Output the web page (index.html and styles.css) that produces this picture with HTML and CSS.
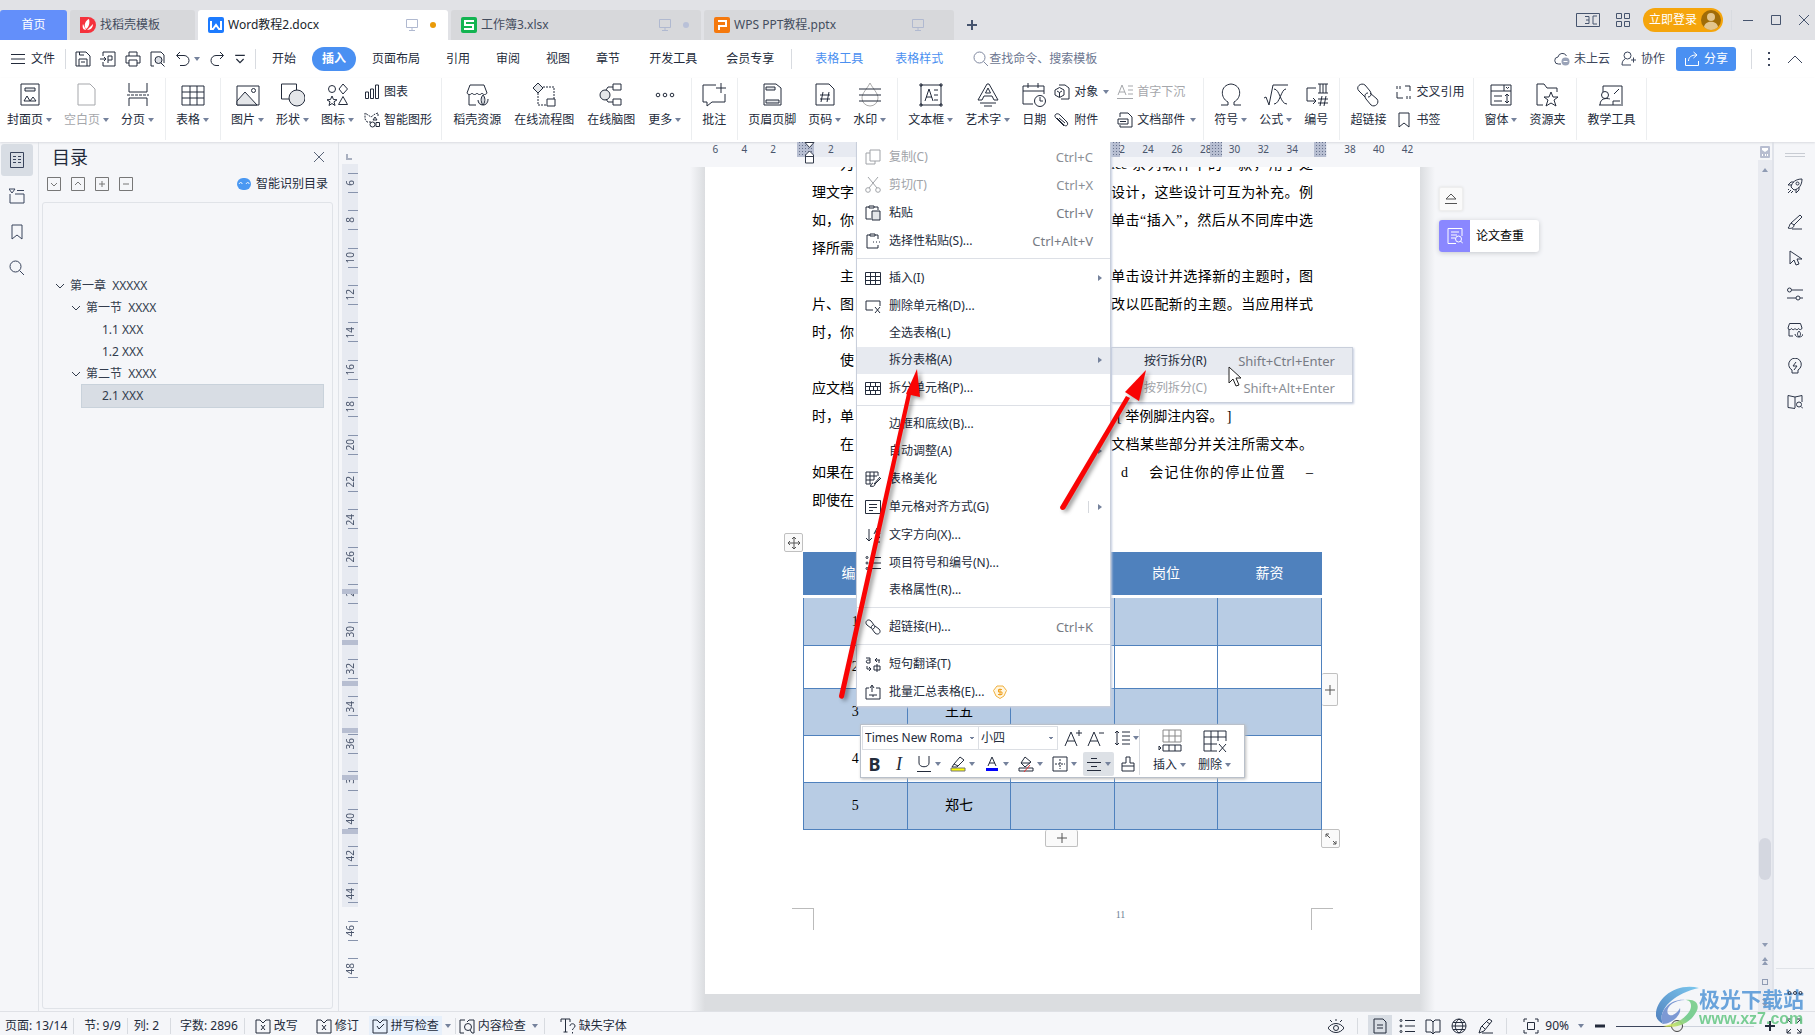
FILE: index.html
```html
<!DOCTYPE html>
<html lang="zh-CN">
<head>
<meta charset="utf-8">
<title>Word教程2.docx</title>
<link rel="stylesheet" href="styles.css">
</head>
<body>
<svg class="defs" aria-hidden="true">
<symbol id="i-monitor" viewBox="0 0 12 12"><path d="M.5.5h11v8H.5zM6 8.500v3M3 11.500h6"/></symbol>
<symbol id="i-save" viewBox="0 0 16 16"><path d="M1 1h10l4 4v10H1zM4 15V8h8v7M4.500 1v3H9M6 11h4"/></symbol>
<symbol id="i-pdf" viewBox="0 0 16 16"><path d="M3 5V1h12v14H3v-4M0 8h6M4 6l2 2-2 2M8 12V5h4v4H8"/></symbol>
<symbol id="i-print" viewBox="0 0 16 16"><path d="M4 5V1h8v4M1 5h14v7h-3M4 12H1V5M4 9h8v6H4z"/></symbol>
<symbol id="i-preview" viewBox="0 0 16 16"><path d="M4 15H1V1h10l3 3v8"/><circle cx="8.500" cy="9" r="3.500" fill="#dde0e6"/><path d="M11 12l3.500 3.500"/></symbol>
<symbol id="i-undo" viewBox="0 0 16 16"><path d="M5 1L1.500 4.500 5 8M2 4.500h7a5 5 0 0 1 0 10H5"/></symbol>
<symbol id="i-redo" viewBox="0 0 16 16"><path d="M11 1l3.500 3.500L11 8M14 4.500H7a5 5 0 0 0 0 10h3"/></symbol>
<symbol id="i-more" viewBox="0 0 10 10"><path d="M1 2h8M2 5l3 3 3-3"/></symbol>
<symbol id="i-menu" viewBox="0 0 14 12"><path d="M0 1.500h14M0 6h14M0 10.500h14"/></symbol>
<symbol id="i-search" viewBox="0 0 16 16"><circle cx="6.500" cy="6.500" r="5.500"/><path d="M10.500 10.500L15 15"/></symbol>
<symbol id="i-cloud" viewBox="0 0 16 16"><path d="M7 13H4.500a3.500 3.500 0 0 1-.5-7 4.500 4.500 0 0 1 8.500-1"/><circle cx="11.500" cy="10.500" r="4" fill="#9aa3b8" stroke="none"/><path d="M9.500 10.500h4" stroke="#fff"/></symbol>
<symbol id="i-person" viewBox="0 0 16 16"><circle cx="6.500" cy="4.500" r="3.500"/><path d="M4 8c-2 1-3 3-3 6h9M10 9h5M12.500 6.500v5"/></symbol>
<symbol id="i-share" viewBox="0 0 16 16"><path d="M1.500 7v7.500h13V10M4.500 10c0-4 3-6 8-6M9.500 1L13 4l-3.500 3"/></symbol>
<symbol id="i-chevup" viewBox="0 0 16 10"><path d="M1 9l7-7 7 7"/></symbol>
<symbol id="i-cover" viewBox="0 0 24 24"><path d="M3 1h18v21H3z"/><path d="M7 5h10v3H7z" fill="#e4e6e9"/><path d="M6 18l3-5 3 5zM12 18l3-4 3 4z"/></symbol>
<symbol id="i-blank" viewBox="0 0 24 24"><path d="M3 1h12l5 5v16H3z"/></symbol>
<symbol id="i-break" viewBox="0 0 24 24"><path d="M3 0v9h18V0M3 23v-8h18v8"/><path d="M1 12h22" stroke-dasharray="3 1"/></symbol>
<symbol id="i-table" viewBox="0 0 24 24"><path d="M1 3h22v19H1z"/><path d="M1 9h22M1 15h22M9 3v19M16 3v19"/></symbol>
<symbol id="i-picture" viewBox="0 0 24 24"><path d="M1 3h22v19H1z"/><path d="M1 18l8-9 12 13H1z" fill="#e4e6e9"/><circle cx="17.500" cy="7.500" r="2"/></symbol>
<symbol id="i-shape" viewBox="0 0 24 24"><path d="M.5 1h15v15H.5z"/><circle cx="16" cy="15" r="8" fill="#e4e6e9"/></symbol>
<symbol id="i-icons" viewBox="0 0 24 24"><circle cx="6" cy="6" r="3.500"/><path d="M17 1l4.500 5L17 11l-4-5zM6 13l1.500 3.500 3.500.3-3 2 1 3.700-3-2-3 2 1-3.700-3-2 3.500-.3zM17 13.500l4.500 8h-9z"/></symbol>
<symbol id="i-chart" viewBox="0 0 16 16"><path d="M1.500 8h3v6.500h-3zM6.500 5h3v9.500h-3zM11.500 1h3v13.500h-3z"/></symbol>
<symbol id="i-smart" viewBox="0 0 16 16"><path d="M7 10H3L1 7V1l3 2 3 2 4-3 3-1v4" stroke-dasharray="2 1"/><path d="M11 5l2 3H9z"/><circle cx="8.500" cy="12.500" r="2.500"/><path d="M12 10.500h3.500v4H12z"/></symbol>
<symbol id="i-store" viewBox="0 0 24 24"><path d="M11 22H4V11M2 10l3-8h14l3 8c-1 2-4 2-5 0-1 2-4 2-5 0-1 2-4 2-5 0-1 2-4 2-5 0z"/><path d="M18 22c-3-4-2-8 0-10 2 2 3 6 0 10zM18 22c-3 0-5-2-5-5M18 22c3 0 5-2 5-6" fill="#d5d8de"/></symbol>
<symbol id="i-shop" viewBox="0 0 16 16"><path d="M6 14H2V7M1 6l1.500-4.500h11L15 6c0 2-3 2-3.500.5C11 8 8.500 8 8 6.500 7.500 8 5 8 4.500 6.500 4 8 1 8 1 6z"/><path d="M12 15c-2-2-2-4 0-6 2 2 2 4 0 6zM12 15c-2 0-4-1-4-3M12 15c2 0 4-1 4-3"/></symbol>
<symbol id="i-flow" viewBox="0 0 24 24"><path d="M6 0l5 5-5 5-5-5z" fill="#e4e6e9"/><path d="M11 4h11v12M6 10v12h9" stroke-dasharray="2 1"/><path d="M15 16h8v7h-8z"/></symbol>
<symbol id="i-mind" viewBox="0 0 24 24"><circle cx="6" cy="12" r="5" fill="#e4e6e9"/><path d="M14 1h8v6h-8zM14 16h8v6h-8zM14 4H9L7 7M14 19H9l-2-3"/></symbol>
<symbol id="i-dots" viewBox="0 0 24 24"><circle cx="5" cy="12" r="1.800"/><circle cx="12" cy="12" r="1.800"/><circle cx="19" cy="12" r="1.800"/></symbol>
<symbol id="i-comment" viewBox="0 0 24 24"><path d="M14 2H1v17h4v4l5-4h13v-8M19 0v10M14 5h10"/></symbol>
<symbol id="i-hf" viewBox="0 0 24 24"><path d="M4 1h12l5 4v17H4z"/><path d="M6 4h9v3H6zM6 17h13v3H6z" fill="#e4e6e9"/></symbol>
<symbol id="i-pageno" viewBox="0 0 24 24"><path d="M3 1h13l5 5v16H3zM10 9l-2 10M16 9l-2 10M7 12h10M7 16h10"/></symbol>
<symbol id="i-water" viewBox="0 0 24 24"><path d="M12 0c-3 6-8 10-8 15a8 8 0 0 0 16 0c0-5-5-9-8-15z" stroke="#aaa" fill="none"/><path d="M1 6h22M1 12h22M1 18h22"/></symbol>
<symbol id="i-textbox" viewBox="0 0 24 24"><path d="M2 2h20v20H2z"/><path d="M6 18l4-12 4 12M7 14h6M15 7h4M15 12h4M15 17h4"/><path d="M1 1h2v2H1zM21 1h2v2h-2zM1 21h2v2H1zM21 21h2v2h-2z"/></symbol>
<symbol id="i-wordart" viewBox="0 0 24 24"><path d="M2 17L11 1h2l9 16h-4l-2-4H8l-2 4zM9.500 10L12 5l2.500 5zM4 20h16M8 23h8"/></symbol>
<symbol id="i-date" viewBox="0 0 24 24"><path d="M11 21H1V3h21v8M1 8h21M6 0v5M16 0v5"/><circle cx="18" cy="18" r="5.500"/><path d="M18 14v4h3"/></symbol>
<symbol id="i-object" viewBox="0 0 16 16"><path d="M5 1h6l4 3v11H7"/><path d="M5.500 3.500l4.500 2.500v5l-4.500 2.500L1 11V6zM3 7l2.500 1.500L8 7M5.500 8.500V13"/></symbol>
<symbol id="i-clip" viewBox="0 0 16 16"><path d="M3 6l7 7c2 2 5 0 3-3L6 3C3 0-1 3 2 6l8 8M5 6l6 5"/></symbol>
<symbol id="i-drop" viewBox="0 0 16 16"><path d="M1 11L5 1l4 10M2 8h6M11 2h5M11 6h5M11 10h5M0 14.500h16"/></symbol>
<symbol id="i-parts" viewBox="0 0 16 16"><path d="M3 5V1h8l4 4v10H3v-2M1 7h10v5H1zM3 9.500h6"/></symbol>
<symbol id="i-omega" viewBox="0 0 24 24"><path d="M2 22h7v-3C1 15 1 2 12 1c11 1 11 14 3 18v3h7"/></symbol>
<symbol id="i-formula" viewBox="0 0 24 24"><path d="M0 15l2-1 3 8L9 2h15M10 6c6 0 6 15 13 15M22 6c-5 0-6 15-12 15"/></symbol>
<symbol id="i-number" viewBox="0 0 24 24"><path d="M12 5H3v13h9M9 15l3 3-3 3M14 1h10M14 10h10M16 1v9M19 1v9M22 1v9M18 13l-2 10M22 13l-2 10M14 16h10M14 20h10"/></symbol>
<symbol id="i-link" viewBox="0 0 24 24"><path d="M9 14l-6-6c-4-4 2-9 6-6l5 6c2 3 1 6-2 6M14 10l7 6c3 4-2 9-6 6l-5-6c-2-3-1-6 2-6"/></symbol>
<symbol id="i-chain" viewBox="0 0 16 16"><path d="M6 9L2 6C-1 3 3-1 6 2l3 4c1 2 1 3-1 4M10 7l4 3c3 3-1 7-4 4l-3-4c-1-2-1-3 1-4"/></symbol>
<symbol id="i-cross" viewBox="0 0 16 16"><path d="M1 2v3M4 2v3M1 8v6h6M9 2h5v5M11 12v3M14 12v3"/></symbol>
<symbol id="i-mark" viewBox="0 0 16 16"><path d="M3 1h10v14l-5-4-5 4z"/></symbol>
<symbol id="i-form" viewBox="0 0 24 24"><path d="M2 2h20v20H2zM2 8h20M15 2v6M17 4l1.500 1.500L20 4M5 13h8M5 18h8M18 11v9M16 13l2-2 2 2M16 18l2 2 2-2"/></symbol>
<symbol id="i-res" viewBox="0 0 24 24"><path d="M8 22H2V1h7l3 4h10v4"/><path d="M16 9l2 5h5l-4 3 2 6-5-3-5 3 2-6-4-3h5z"/></symbol>
<symbol id="i-teach" viewBox="0 0 24 24"><path d="M4 9V3h19v18M15 11l5-5M0 22h24M14 22v-4h7"/><circle cx="6" cy="12" r="3.500"/><path d="M1 22c0-9 10-6 10-6"/></symbol>
<symbol id="i-doc" viewBox="0 0 16 16"><path d="M1.500.5h13v15h-13zM4 4.500h3M4 7.500h3M4 10.500h3M9 4.500h3M9 7.500h3M9 10.500h3"/></symbol>
<symbol id="i-outline" viewBox="0 0 16 16"><path d="M1 6v9h14V6H6M8 2.500h7M0 1h6L3 5z"/></symbol>
<symbol id="i-close" viewBox="0 0 12 12"><path d="M1 1l10 10M11 1L1 11"/></symbol>
<symbol id="i-rocket" viewBox="0 0 16 16"><path d="M4 9c1-5 5-8 11-8 0 6-3 10-8 11zM5 7H1l3-3h3M9 11v4l3-3V9M2 11l-1 1M4 12l-3 3M6 13l-2 2"/><circle cx="10.500" cy="5.500" r="1.500"/></symbol>
<symbol id="i-pen" viewBox="0 0 16 16"><path d="M13 1l2 2-8 8-3-2zM5 9c-3 0-2 4-4 5 3 1 6 0 6-3M5 15h10"/></symbol>
<symbol id="i-write" viewBox="0 0 16 16"><path d="M12 1l3 2-8 10-5 2 2-6zM10 4l3 2M5 8l3 3M5 15h11"/></symbol>
<symbol id="i-cursor" viewBox="0 0 16 16"><path d="M3 1v13l4-4 2 5 3-1-2-5h5z"/></symbol>
<symbol id="i-slide" viewBox="0 0 16 16"><circle cx="2.500" cy="4" r="2"/><circle cx="11" cy="12" r="2"/><path d="M5 4h11M0 12h9M13 12h3"/></symbol>
<symbol id="i-bulb" viewBox="0 0 16 16"><path d="M5 12a6.300 6.300 0 1 1 6 0v3H5zM9 4L6 8h4l-3 4"/></symbol>
<symbol id="i-book" viewBox="0 0 16 16"><path d="M8 3v11M8 3L1 1.500v12l7 1M8 3l7-1.500V8"/><circle cx="12" cy="10.500" r="2.500"/><path d="M14 12.500l2 2"/></symbol>
<symbol id="i-copy" viewBox="0 0 16 16"><path d="M5 1h10v11H5zM5 4H1v11h9v-3"/></symbol>
<symbol id="i-cut" viewBox="0 0 16 16"><path d="M3 0l9 11M13 0L4 11"/><circle cx="3" cy="13" r="2.300"/><circle cx="13" cy="13" r="2.300"/></symbol>
<symbol id="i-paste" viewBox="0 0 16 16"><path d="M6 14H1V2h3M9 2h4v3M4 1h5v2H4z"/><path d="M7 6h8v9H7z" fill="#e4e6e9"/></symbol>
<symbol id="i-pastes" viewBox="0 0 16 16"><path d="M13 12v3H2V2h3M10 2h3v4M5 1h5v2H5zM8 9h1M11 9h1M14 9h1"/></symbol>
<symbol id="i-tbl" viewBox="0 0 16 16"><path d="M.5 2.500h15v12H.5zM0 6.500h16M0 10.500h16M5.500 2v12M10.500 2v12"/></symbol>
<symbol id="i-delc" viewBox="0 0 16 16"><path d="M15 8V3H1v9h7M10 9l5 6M15 9l-5 6"/></symbol>
<symbol id="i-split" viewBox="0 0 16 16"><path d="M.5 2.500h15v12H.5zM0 6.500h16M0 10.500h16M5.500 2v4M10.500 2v4M8.500 6v4M4.500 6v4M12.500 6v4M5.500 10v4M10.500 10v4"/></symbol>
<symbol id="i-beauty" viewBox="0 0 16 16"><path d="M6 13H1V1h12v4M1 5h11M1 9h8M5 1v12M9 1v8M15 6l-6 7M8 12c-2 0-1 3-3 3 3 1 5 0 5-2l6-6"/></symbol>
<symbol id="i-align" viewBox="0 0 16 16"><path d="M.5 1.500h15v13H.5zM4 5.500h8M4 8.500h8M4 11.500h4"/></symbol>
<symbol id="i-dir" viewBox="0 0 16 16"><path d="M4 2v12M1 11l3 3 3-3M9 7l3-6 3 6M10 5h4M10 10h5l-5 5h5"/></symbol>
<symbol id="i-list" viewBox="0 0 16 16"><circle cx="2" cy="2.500" r="1"/><circle cx="2" cy="8" r="1"/><circle cx="2" cy="13.500" r="1"/><path d="M6 2.500h10M6 8h10M6 13.500h10"/></symbol>
<symbol id="i-trans" viewBox="0 0 16 16"><path d="M1 2h4v5H2c-2-3 1-3 3-3M10 4h5M12 2l-2 2 2 2M14 4v3M2 10v3h4M4 11l2 2-2 2M9 10h6v4H9zM12 8v8"/></symbol>
<symbol id="i-batch" viewBox="0 0 16 16"><path d="M4 4H1v11h14V4h-4M7 8V2M5 4l2-3 2 3M4 11h8M8 11v2"/></symbol>
<symbol id="i-spell" viewBox="0 0 16 16"><path d="M5 2H1v13h14V2h-4l-3 3zM5 8l2 3 5-5"/></symbol>
<symbol id="i-rev" viewBox="0 0 16 16"><path d="M5 2H1v13h14V2h-4l-3 3zM6 7l4 5M10 7l-4 5"/></symbol>
<symbol id="i-content" viewBox="0 0 16 16"><path d="M6 2H1v13h4M8 4l2-2h5v13h-2"/><circle cx="9" cy="9" r="3.500"/><path d="M11 12l2 3"/></symbol>
<symbol id="i-font" viewBox="0 0 16 16"><path d="M1 4V1h9v3M5.500 1v13M3.500 14h4M10 8c0-3 5-3 5 0 0 2-2.500 2-2.500 4M12.500 14v1.500"/></symbol>
<symbol id="i-eye" viewBox="0 0 16 16"><path d="M0 10c4-6 12-6 16 0-4 6-12 6-16 0zM8 1v2M2 2l2 2M14 2l-2 2"/><circle cx="8" cy="10" r="2.500"/></symbol>
<symbol id="i-pagev" viewBox="0 0 16 16"><path d="M2 1h9l3 3v11H2zM5 7h6M5 10h6"/></symbol>
<symbol id="i-read" viewBox="0 0 16 16"><path d="M1 2h5l2 2 2-2h5v12h-5l-2 2-2-2H1zM8 4v11"/></symbol>
<symbol id="i-globe" viewBox="0 0 16 16"><circle cx="8" cy="8" r="7"/><path d="M1 8h14M2 4.500h12M2 11.500h12M8 1c-5 4-5 10 0 14M8 1c5 4 5 10 0 14"/></symbol>
<symbol id="i-fit" viewBox="0 0 16 16"><path d="M1 4V1h3M12 1h3v3M15 12v3h-3M4 15H1v-3M4.500 4.500h7v7h-7z"/></symbol>
<symbol id="i-full" viewBox="0 0 16 16"><path d="M1 5V1h4M1 1l4 4M11 1h4v4M15 1l-4 4M15 11v4h-4M15 15l-4-4M1 11v4h4M1 15l4-4"/></symbol>
<symbol id="i-plus" viewBox="0 0 12 12"><path d="M6 1v10M1 6h10"/></symbol>
<symbol id="i-tw" viewBox="0 0 10 6"><path d="M1 1l4 4 4-4"/></symbol>
<symbol id="i-boxd" viewBox="0 0 14 14"><path d="M.5.5h13v13H.5zM4 6l3 3 3-3"/></symbol>
<symbol id="i-boxu" viewBox="0 0 14 14"><path d="M.5.5h13v13H.5zM4 8l3-3 3 3"/></symbol>
<symbol id="i-boxp" viewBox="0 0 14 14"><path d="M.5.5h13v13H.5zM4 7h6M7 4v6"/></symbol>
<symbol id="i-boxm" viewBox="0 0 14 14"><path d="M.5.5h13v13H.5zM4 7h6"/></symbol>
<symbol id="i-fa" viewBox="0 0 18 18"><path d="M1 17L7 3l6 14M3 12h8"/></symbol>
<symbol id="i-under" viewBox="0 0 16 16"><path d="M3 0v7c0 5 10 5 10 0V0M1 15.500h14"/></symbol>
<symbol id="i-lsp" viewBox="0 0 16 16"><path d="M3 1v14M1 3l2-2 2 2M1 13l2 2 2-2M8 2h8M8 6h8M8 10h8M8 14h8"/></symbol>
<symbol id="i-hl" viewBox="0 0 16 16"><path d="M10 1l4 3-6 6-4-2zM4 8l-2 3h5l1-1"/><path d="M1 12h14v3H1z" fill="#ff0" stroke="#777"/></symbol>
<symbol id="i-fc" viewBox="0 0 16 16"><path d="M4 10L8 1l4 9M5 7h6"/><path d="M2 13.500h12" stroke="#00f" stroke-width="3"/></symbol>
<symbol id="i-paint" viewBox="0 0 16 16"><path d="M7 1l6 5-6 5-4-4zM3 7h9M1 12h14v3H1z"/><path d="M6 16l6-7" stroke="#e33"/></symbol>
<symbol id="i-bord" viewBox="0 0 16 16"><path d="M1 1h14v14H1z"/><path d="M8 3v10M3 8h10" stroke-dasharray="2 1"/></symbol>
<symbol id="i-center" viewBox="0 0 16 16"><path d="M5 2.500h6M1 6.500h14M5 10.500h6M1 14.500h14"/></symbol>
<symbol id="i-brush" viewBox="0 0 16 16"><path d="M6 7V1h4v6h4v8H2V7zM2 10h12"/></symbol>
<symbol id="i-instbl" viewBox="0 0 24 24"><path d="M5 1h18v12H5zM5 7h18M11 1v12M17 1v12" stroke="#888"/><path d="M5 16h18v6H5zM11 16v6M17 16v6M1 17l2 2-2 2z"/></symbol>
<symbol id="i-deltbl" viewBox="0 0 24 24"><path d="M14 22H1V2h22v10M1 8h22M1 15h13M8 2v20M15 2v10M16 15l7 8M23 15l-7 8"/></symbol>
</svg>

<header class="titlebar">
  <nav class="tabs">
    <button class="tab home">首页</button>
    <button class="tab docer"><svg class="logo" viewBox="0 0 16 16"><path d="M0 0h8a8 8 0 0 1 0 16H0z" fill="#f5323c"/><path d="M6 12C3 8 6 3 9 2c1 4 0 8-3 10zM6 13C3 13 2 10 3 7M7 13c4 0 6-3 6-6" fill="#fff"/></svg><span>找稻壳模板</span></button>
    <button class="tab file on"><svg class="logo" viewBox="0 0 16 16"><rect width="16" height="16" rx="2" fill="#1d7bff"/><path d="M3 4v8h2l3-4 3 4h2V4" fill="none" stroke="#fff" stroke-width="2"/></svg><span>Word教程2.docx</span><svg class="ic mon"><use href="#i-monitor"/></svg><i class="dot"></i></button>
    <button class="tab file"><svg class="logo" viewBox="0 0 16 16"><rect width="16" height="16" rx="2" fill="#13b451"/><path d="M13 4H4v4h8v4H3" fill="none" stroke="#fff" stroke-width="2"/></svg><span>工作簿3.xlsx</span><svg class="ic mon"><use href="#i-monitor"/></svg><i class="dot"></i></button>
    <button class="tab file"><svg class="logo" viewBox="0 0 16 16"><rect width="16" height="16" rx="2" fill="#f5790e"/><path d="M4 4h8v5H5v4" fill="none" stroke="#fff" stroke-width="2"/></svg><span>WPS PPT教程.pptx</span><svg class="ic mon"><use href="#i-monitor"/></svg><i class="dot none"></i></button>
    <button class="newtab" aria-label="新建"><svg class="ic s12"><use href="#i-plus"/></svg></button>
  </nav>
  <div class="winctl">
    <button aria-label="窗口"><svg class="ic" width="24" height="14" viewBox="0 0 24 14"><path d="M.5.500h23v13H.5zM21 3h-4v8h4M9 3.500h4v7H9M10 7h3"/></svg></button>
    <button aria-label="应用"><svg class="ic" width="14" height="14" viewBox="0 0 14 14"><path d="M.5.500h5v5h-5zM8.500.500h5v5h-5zM.5 8.500h5v5h-5zM8.500 8.500h5v5h-5z"/></svg></button>
    <button class="login">立即登录<svg width="20" height="20" viewBox="0 0 20 20"><circle cx="10" cy="10" r="10" fill="#a06c08"/><circle cx="10" cy="7" r="4" fill="#e3c58d"/><path d="M3 17c1-7 13-7 14 0-4 4-10 4-14 0z" fill="#e3c58d"/></svg></button>
    <i class="vsep"></i>
    <button aria-label="最小化"><svg class="ic s12"><path d="M1 6.500h10"/></svg></button>
    <button aria-label="最大化"><svg class="ic s12"><path d="M1.500 1.500h9v9h-9z"/></svg></button>
    <button aria-label="关闭"><svg class="ic s12"><use href="#i-close"/></svg></button>
  </div>
</header>

<div class="menubar">
  <button class="filebtn"><svg class="ic" width="14" height="12"><use href="#i-menu"/></svg>文件</button>
  <i class="vsep"></i>
  <div class="quick">
    <button aria-label="保存"><svg class="ic s16"><use href="#i-save"/></svg></button>
    <button aria-label="输出PDF"><svg class="ic s16"><use href="#i-pdf"/></svg></button>
    <button aria-label="打印"><svg class="ic s16"><use href="#i-print"/></svg></button>
    <button aria-label="预览"><svg class="ic s16"><use href="#i-preview"/></svg></button>
    <button aria-label="撤销"><svg class="ic s16"><use href="#i-undo"/></svg><i class="ar"></i></button>
    <button aria-label="恢复"><svg class="ic s16"><use href="#i-redo"/></svg></button>
    <button aria-label="更多"><svg class="ic s12"><use href="#i-more"/></svg></button>
  </div>
  <i class="vsep"></i>
  <nav class="menus">
    <a href="#">开始</a><a href="#" class="on">插入</a><a href="#">页面布局</a><a href="#">引用</a><a href="#">审阅</a><a href="#">视图</a><a href="#">章节</a><a href="#" class="wide">开发工具</a><a href="#" class="wide">会员专享</a>
  </nav>
  <i class="vsep"></i>
  <nav class="menus ctx"><a href="#">表格工具</a><a href="#">表格样式</a></nav>
  <label class="search"><svg class="ic s16"><use href="#i-search"/></svg><input type="text" placeholder="查找命令、搜索模板" aria-label="查找命令"></label>
  <div class="mright">
    <button><svg class="ic s16"><use href="#i-cloud"/></svg>未上云</button>
    <button><svg class="ic s16"><use href="#i-person"/></svg>协作</button>
    <button class="share"><svg class="ic s16"><use href="#i-share"/></svg>分享</button>
    <i class="vsep"></i>
    <button aria-label="选项"><svg class="ic" width="4" height="16" viewBox="0 0 4 16"><path d="M1 2h2M1 8h2M1 14h2" stroke-width="2"/></svg></button>
    <button class="fold" aria-label="折叠"><svg class="ic" width="16" height="10"><use href="#i-chevup"/></svg></button>
  </div>
</div>

<div class="ribbon">
  <div class="grp">
    <button class="rb"><svg class="ic s24"><use href="#i-cover"/></svg><span>封面页<i class="ar"></i></span></button>
    <button class="rb dim"><svg class="ic s24"><use href="#i-blank"/></svg><span>空白页<i class="ar"></i></span></button>
    <button class="rb"><svg class="ic s24"><use href="#i-break"/></svg><span>分页<i class="ar"></i></span></button>
  </div>
  <div class="grp"><button class="rb"><svg class="ic s24"><use href="#i-table"/></svg><span>表格<i class="ar"></i></span></button></div>
  <div class="grp">
    <button class="rb"><svg class="ic s24"><use href="#i-picture"/></svg><span>图片<i class="ar"></i></span></button>
    <button class="rb"><svg class="ic s24"><use href="#i-shape"/></svg><span>形状<i class="ar"></i></span></button>
    <button class="rb"><svg class="ic s24"><use href="#i-icons"/></svg><span>图标<i class="ar"></i></span></button>
    <div class="stack"><button><svg class="ic s16"><use href="#i-chart"/></svg>图表</button><button><svg class="ic s16"><use href="#i-smart"/></svg>智能图形</button></div>
  </div>
  <div class="grp online">
    <button class="rb"><svg class="ic s24"><use href="#i-store"/></svg><span>稻壳资源</span></button>
    <button class="rb"><svg class="ic s24"><use href="#i-flow"/></svg><span>在线流程图</span></button>
    <button class="rb"><svg class="ic s24"><use href="#i-mind"/></svg><span>在线脑图</span></button>
    <button class="rb"><svg class="ic s24"><use href="#i-dots"/></svg><span>更多<i class="ar"></i></span></button>
  </div>
  <div class="grp"><button class="rb"><svg class="ic s24"><use href="#i-comment"/></svg><span>批注</span></button></div>
  <div class="grp">
    <button class="rb"><svg class="ic s24"><use href="#i-hf"/></svg><span>页眉页脚</span></button>
    <button class="rb"><svg class="ic s24"><use href="#i-pageno"/></svg><span>页码<i class="ar"></i></span></button>
    <button class="rb"><svg class="ic s24"><use href="#i-water"/></svg><span>水印<i class="ar"></i></span></button>
  </div>
  <div class="grp tight">
    <button class="rb"><svg class="ic s24"><use href="#i-textbox"/></svg><span>文本框<i class="ar"></i></span></button>
    <button class="rb"><svg class="ic s24"><use href="#i-wordart"/></svg><span>艺术字<i class="ar"></i></span></button>
    <button class="rb"><svg class="ic s24"><use href="#i-date"/></svg><span>日期</span></button>
    <div class="stack"><button><svg class="ic s16"><use href="#i-object"/></svg>对象<i class="ar"></i></button><button><svg class="ic s16"><use href="#i-clip"/></svg>附件</button></div>
    <div class="stack"><button class="dim"><svg class="ic s16"><use href="#i-drop"/></svg>首字下沉</button><button><svg class="ic s16"><use href="#i-parts"/></svg>文档部件<i class="ar"></i></button></div>
  </div>
  <div class="grp">
    <button class="rb"><svg class="ic s24"><use href="#i-omega"/></svg><span>符号<i class="ar"></i></span></button>
    <button class="rb"><svg class="ic s24"><use href="#i-formula"/></svg><span>公式<i class="ar"></i></span></button>
    <button class="rb"><svg class="ic s24"><use href="#i-number"/></svg><span>编号</span></button>
  </div>
  <div class="grp">
    <button class="rb"><svg class="ic s24"><use href="#i-link"/></svg><span>超链接</span></button>
    <div class="stack"><button><svg class="ic s16"><use href="#i-cross"/></svg>交叉引用</button><button><svg class="ic s16"><use href="#i-mark"/></svg>书签</button></div>
  </div>
  <div class="grp">
    <button class="rb"><svg class="ic s24"><use href="#i-form"/></svg><span>窗体<i class="ar"></i></span></button>
    <button class="rb"><svg class="ic s24"><use href="#i-res"/></svg><span>资源夹</span></button>
  </div>
  <div class="grp"><button class="rb"><svg class="ic s24"><use href="#i-teach"/></svg><span>教学工具</span></button></div>
</div>

<main class="work">
  <nav class="rail">
    <button class="on" aria-label="目录"><svg class="ic s16"><use href="#i-doc"/></svg></button>
    <button aria-label="章节"><svg class="ic s16"><use href="#i-outline"/></svg></button>
    <button aria-label="书签"><svg class="ic s16"><use href="#i-mark"/></svg></button>
    <button aria-label="查找"><svg class="ic s16"><use href="#i-search"/></svg></button>
  </nav>
  <aside class="panel">
    <div class="phead"><h2>目录</h2><button aria-label="关闭"><svg class="ic s12"><use href="#i-close"/></svg></button></div>
    <div class="ptools">
      <button aria-label="展开"><svg class="ic s14"><use href="#i-boxd"/></svg></button>
      <button aria-label="收起"><svg class="ic s14"><use href="#i-boxu"/></svg></button>
      <button aria-label="增加"><svg class="ic s14"><use href="#i-boxp"/></svg></button>
      <button aria-label="减少"><svg class="ic s14"><use href="#i-boxm"/></svg></button>
      <button class="smart"><svg width="14" height="12" viewBox="0 0 14 12"><rect width="14" height="12" rx="6" fill="#4a98f2"/><path d="M2 6c1-2 3-2 3 0M9 6c1-2 3-2 3 0" stroke="#fff" fill="none"/></svg>智能识别目录</button>
    </div>
    <ul class="tree">
      <li class="l1"><svg class="ic tw"><use href="#i-tw"/></svg>第一章&nbsp; XXXXX</li>
      <li class="l2"><svg class="ic tw"><use href="#i-tw"/></svg>第一节&nbsp; XXXX</li>
      <li class="l3">1.1 XXX</li>
      <li class="l3">1.2 XXX</li>
      <li class="l2"><svg class="ic tw"><use href="#i-tw"/></svg>第二节&nbsp; XXXX</li>
      <li class="l3 on">2.1 XXX</li>
    </ul>
  </aside>

  <section class="canvas">
    <div class="vruler">
      <div class="corner"><i></i></div>
      <ol>
        <li><b>6</b></li><li><b>8</b></li><li><b>10</b></li><li><b>12</b></li><li><b>14</b></li><li><b>16</b></li><li><b>18</b></li><li><b>20</b></li><li><b>22</b></li><li><b>24</b></li><li><b>26</b></li><li><b>2</b></li><li><b>30</b></li><li><b>32</b></li><li><b>34</b></li><li><b>36</b></li><li><b>3</b></li><li><b>40</b></li><li><b>42</b></li><li><b>44</b></li><li><b>46</b></li><li><b>48</b></li>
      </ol>
      <i class="rowmark r1"></i><i class="rowmark r2"></i><i class="rowmark r3"></i><i class="rowmark r4"></i><i class="rowmark r5"></i><i class="rowmark r6"></i>
    </div>
    <div class="stage">
    <div class="doc">
      <div class="hruler">
        <i class="band"></i>
        <ol><li>6</li><li>4</li><li>2</li><li></li><li>2</li><li></li><li></li><li></li><li></li><li></li><li></li><li></li><li></li><li></li><li>22</li><li>24</li><li>26</li><li>28</li><li>30</li><li>32</li><li>34</li><li></li><li>38</li><li>40</li><li>42</li></ol>
        <i class="colmark c1"></i><i class="colmark c2"></i><i class="colmark c3"></i><i class="colmark c4"></i>
        <svg class="indent" width="11" height="22" viewBox="0 0 11 22"><path d="M1 .5h9l-4.500 5zM5.500 9l4 4v8h-8v-8zM1.500 14.500h8" fill="#fff" stroke="#333a4a"/></svg>
      </div>
      <div class="shade">
      <article class="page">
        <div class="text">
          <p><span>　　为</span><span class="end">ice 系列软件中的一款，用于处</span></p>
          <p><span>理文字</span><span class="end">设计，这些设计可互为补充。例</span></p>
          <p><span>如，你</span><span class="end">单击“插入”，然后从不同库中选</span></p>
          <p><span>择所需</span></p>
          <p><span>　　主</span><span class="end">单击设计并选择新的主题时，图</span></p>
          <p><span>片、图</span><span class="end">改以匹配新的主题。当应用样式</span></p>
          <p><span>时，你</span></p>
          <p><span>　　使</span></p>
          <p><span>应文档</span></p>
          <p><span>时，单</span><span class="end note">[ 举例脚注内容。 ]</span></p>
          <p><span>　　在</span><span class="end">文档某些部分并关注所需文本。</span></p>
          <p><span>如果在</span><span class="end note loose">d　&nbsp;会记住你的停止位置　&nbsp;–</span></p>
          <p><span>即使在</span></p>
        </div>
        <table>
          <thead><tr><th>编号</th><th></th><th></th><th>岗位</th><th>薪资</th></tr></thead>
          <tbody>
            <tr><td>1</td><td></td><td></td><td></td><td></td></tr>
            <tr><td>2</td><td></td><td></td><td></td><td></td></tr>
            <tr><td>3</td><td>王五</td><td></td><td></td><td></td></tr>
            <tr><td>4</td><td></td><td></td><td></td><td></td></tr>
            <tr><td>5</td><td>郑七</td><td></td><td></td><td></td></tr>
          </tbody>
        </table>
        <footer class="foot"><i class="cl"></i><span>11</span><i class="cr"></i></footer>
      </article>
      </div>

      <button class="h hmove" aria-label="移动表格"><svg class="ic s16" viewBox="0 0 16 16"><path d="M8 2v12M2 8h12M6 4l2-2 2 2M6 12l2 2 2-2M4 6L2 8l2 2M12 6l2 2-2 2"/></svg></button>
      <button class="h hcol" aria-label="添加列"><svg class="ic s12"><use href="#i-plus"/></svg></button>
      <button class="h hrow" aria-label="添加行"><svg class="ic s12"><use href="#i-plus"/></svg></button>
      <button class="h hsize" aria-label="调整大小"><svg class="ic s16" viewBox="0 0 16 16"><path d="M3 6V3h3M3 3l4 4M13 10v3h-3M13 13l-3-3"/></svg></button>
      <button class="h eject" aria-label="收起"><svg class="ic s12" viewBox="0 0 12 12"><path d="M6 1l5 5H1zM0 10.500h12"/></svg></button>
      <button class="check"><span><svg class="ic s16" viewBox="0 0 16 16"><path d="M15 8V.5H1v15h8M4 4h8M4 7h6M4 10h4"/><circle cx="11.500" cy="11" r="3"/><path d="M13.500 13l2.500 2.500"/></svg></span>论文查重</button>

      <div class="menu">
        <button class="mi dim"><svg class="ic s16"><use href="#i-copy"/></svg>复制(C)<kbd>Ctrl+C</kbd></button>
        <button class="mi dim"><svg class="ic s16"><use href="#i-cut"/></svg>剪切(T)<kbd>Ctrl+X</kbd></button>
        <button class="mi"><svg class="ic s16"><use href="#i-paste"/></svg>粘贴<kbd>Ctrl+V</kbd></button>
        <button class="mi"><svg class="ic s16"><use href="#i-pastes"/></svg>选择性粘贴(S)...<kbd>Ctrl+Alt+V</kbd></button>
        <hr>
        <button class="mi"><svg class="ic s16"><use href="#i-tbl"/></svg>插入(I)<i class="sub"></i></button>
        <button class="mi"><svg class="ic s16"><use href="#i-delc"/></svg>删除单元格(D)...</button>
        <button class="mi low">全选表格(L)</button>
        <button class="mi low on">拆分表格(A)<i class="sub"></i></button>
        <button class="mi"><svg class="ic s16"><use href="#i-split"/></svg>拆分单元格(P)...</button>
        <hr>
        <button class="mi low">边框和底纹(B)...</button>
        <button class="mi low">自动调整(A)<i class="sub"></i></button>
        <button class="mi"><svg class="ic s16"><use href="#i-beauty"/></svg>表格美化</button>
        <button class="mi"><svg class="ic s16"><use href="#i-align"/></svg>单元格对齐方式(G)<i class="bar"></i><i class="sub"></i></button>
        <button class="mi"><svg class="ic s16"><use href="#i-dir"/></svg>文字方向(X)...</button>
        <button class="mi"><svg class="ic s16"><use href="#i-list"/></svg>项目符号和编号(N)...</button>
        <button class="mi low">表格属性(R)...</button>
        <hr>
        <button class="mi"><svg class="ic s16"><use href="#i-chain"/></svg>超链接(H)...<kbd>Ctrl+K</kbd></button>
        <hr>
        <button class="mi"><svg class="ic s16"><use href="#i-trans"/></svg>短句翻译(T)</button>
        <button class="mi"><svg class="ic s16"><use href="#i-batch"/></svg>批量汇总表格(E)...<svg class="coin" width="14" height="14" viewBox="0 0 14 14"><path d="M4 1h6l3.500 4.500L11 11l-4 2.500L3 11 .5 5.500z" fill="#fff6e0" stroke="#f0b040"/><path d="M9 4.500H5.500V7H9v2.500H5M7 3.500v7" stroke="#f0a020" fill="none"/></svg></button>
      </div>
      <div class="menu submenu">
        <button class="mi low on">按行拆分(R)<kbd>Shift+Ctrl+Enter</kbd></button>
        <button class="mi low dim">按列拆分(C)<kbd>Shift+Alt+Enter</kbd></button>
      </div>

      <div class="mini">
        <div class="rows">
          <div class="r"><select class="fn" aria-label="字体"><option>Times New Roma</option></select><select class="fs" aria-label="字号"><option>小四</option></select>
            <button aria-label="增大字号"><svg class="ic s18"><use href="#i-fa"/><path d="M12 4h6M15 1v6"/></svg></button><button aria-label="减小字号"><svg class="ic s18"><use href="#i-fa"/><path d="M12 4h5"/></svg></button><button class="gapl" aria-label="行距"><svg class="ic s16"><use href="#i-lsp"/></svg><i class="ar"></i></button></div>
          <div class="r r2">
            <button class="bold">B</button><button class="ital">I</button><button aria-label="下划线"><svg class="ic s16"><use href="#i-under"/></svg><i class="ar"></i></button>
            <button aria-label="突出显示"><svg class="ic s16"><use href="#i-hl"/></svg><i class="ar"></i></button><button aria-label="字体颜色"><svg class="ic s16"><use href="#i-fc"/></svg><i class="ar"></i></button><button aria-label="底纹"><svg class="ic s16"><use href="#i-paint"/></svg><i class="ar"></i></button><button aria-label="边框"><svg class="ic s16"><use href="#i-bord"/></svg><i class="ar"></i></button><button class="on" aria-label="对齐"><svg class="ic s16"><use href="#i-center"/></svg><i class="ar"></i></button><button aria-label="格式刷"><svg class="ic s16"><use href="#i-brush"/></svg></button>
          </div>
        </div>
        <i class="vsep"></i>
        <button class="rb"><svg class="ic s24"><use href="#i-instbl"/></svg><span>插入<i class="ar"></i></span></button>
        <button class="rb"><svg class="ic s24"><use href="#i-deltbl"/></svg><span>删除<i class="ar"></i></span></button>
      </div>

      <svg class="arrows" width="745" height="870" viewBox="0 0 745 870">
        <g class="red"><path d="M149 554l69-307 4 1-68 307c-1 3-5 2-5-1z"/><path d="M227 227l-11 25 14 3z"/><path d="M370 365l66-111 4 2-65 111c-2 2-5 1-5-2z"/><path d="M456 228l-21 22 14 9z"/></g>
        <path d="M539 225v16l4-4 3 7 3-1-3-7h5z" fill="#fff" stroke="#222"/>
      </svg>
    </div>
    </div>
  </section>

  <div class="scroll">
    <svg width="10" height="12" viewBox="0 0 10 12"><rect width="10" height="12" rx="1" fill="#b7bdd0"/><path d="M2 2h6v2L5 6 2 4zM2 8h1v2H2zM5 8h1v2H5zM7 8h1v2H7z" fill="#fff"/></svg>
    <div class="track"><i class="up"></i><i class="thumb"></i><i class="dn"></i><i class="up two"></i><i class="sq"></i><i class="dn two"></i></div>
  </div>
  <nav class="rrail">
    <i class="grip"></i>
    <button aria-label="快捷"><svg class="ic s16"><use href="#i-rocket"/></svg></button>
    <button aria-label="样式"><svg class="ic s16"><use href="#i-pen"/></svg></button>
    <button aria-label="选择"><svg class="ic s16"><use href="#i-cursor"/></svg></button>
    <button aria-label="属性"><svg class="ic s16"><use href="#i-slide"/></svg></button>
    <button aria-label="稻壳"><svg class="ic s16"><use href="#i-shop"/></svg></button>
    <button aria-label="帮助"><svg class="ic s16"><use href="#i-bulb"/></svg></button>
    <button aria-label="查阅"><svg class="ic s16"><use href="#i-book"/></svg></button>
    <button class="last" aria-label="更多"><svg class="ic s16" viewBox="0 0 16 16"><circle cx="2.500" cy="8" r="1.500"/><circle cx="8" cy="8" r="1.500"/><circle cx="13.500" cy="8" r="1.500"/></svg></button>
  </nav>
</main>

<footer class="status">
  <div class="sl">
    <span>页面: 13/14</span><i class="vsep"></i><span class="sec">节: 9/9</span><i class="vsep"></i><span>列: 2</span><i class="vsep col"></i><span>字数: 2896</span><i class="vsep"></i>
    <button class="a"><svg class="ic s16"><use href="#i-rev"/></svg>改写</button>
    <button class="b"><svg class="ic s16"><use href="#i-rev"/></svg>修订</button>
    <button class="hot"><svg class="ic s16"><use href="#i-spell"/></svg>拼写检查</button><i class="ar"></i><i class="vsep chk"></i>
    <button class="cc"><svg class="ic s16"><use href="#i-content"/></svg>内容检查<i class="ar"></i></button><i class="vsep"></i>
    <button class="miss"><svg class="ic s16"><use href="#i-font"/></svg>缺失字体</button>
  </div>
  <div class="sr">
    <button aria-label="护眼"><svg class="ic s16"><use href="#i-eye"/></svg></button><i class="vsep v1"></i>
    <button class="on" aria-label="页面视图"><svg class="ic s16"><use href="#i-pagev"/></svg></button>
    <button aria-label="大纲"><svg class="ic s16"><use href="#i-list"/></svg></button>
    <button aria-label="阅读"><svg class="ic s16"><use href="#i-read"/></svg></button>
    <button aria-label="Web版式"><svg class="ic s16"><use href="#i-globe"/></svg></button>
    <button aria-label="写作"><svg class="ic s16"><use href="#i-write"/></svg></button><i class="vsep v2"></i>
    <button class="zoomv"><svg class="ic s16"><use href="#i-fit"/></svg>90%<i class="ar"></i></button>
    <button aria-label="缩小"><svg class="ic s12"><path d="M1 6h10" stroke-width="3"/></svg></button>
    <input type="range" min="0" max="100" value="44" aria-label="缩放">
    <button aria-label="放大"><svg class="ic s12"><path d="M1 6h10M6 1v10" stroke-width="2"/></svg></button>
    <button aria-label="全屏"><svg class="ic s16"><use href="#i-full"/></svg></button>
  </div>
</footer>

<div class="brand">
  <svg width="44" height="42" viewBox="0 0 44 42"><defs><linearGradient id="gb" x1="0" y1="1" x2="1" y2="0"><stop offset="0" stop-color="#3f74b8"/><stop offset="1" stop-color="#6fc4ee"/></linearGradient><linearGradient id="gg" x1="0" y1="1" x2="1" y2="0"><stop offset="0" stop-color="#f0ee50"/><stop offset=".5" stop-color="#6cc98a"/><stop offset="1" stop-color="#7bd08a"/></linearGradient></defs>
  <path d="M44 2C22-4 0 12 1 30c1 4 4 6 7 8-6-12 8-30 36-36z" fill="url(#gb)"/><path d="M8 38c-6-12 8-26 22-24-12 0-20 8-17 14 4 4 10-2 12-6 2 8-10 16-17 16z" fill="#6f8fd0"/><path d="M30 14c12-2 16 6 10 14-6 10-20 15-32 12 16-2 28-12 28-20 0-4-2-6-6-6z" fill="url(#gg)"/></svg>
  <div><strong>极光下载站</strong><span>www.xz7.com</span></div>
</div>
</body>
</html>
```
FILE: styles.css
```css
* { box-sizing: border-box; }
body {
  margin: 0; height: 100vh; min-height: 1035px; display: flex; flex-direction: column; overflow: hidden; position: relative;
  font: 12px/16px "Noto Sans", "Noto Sans CJK SC", sans-serif; color: #232b3b; background: #f5f6f9;
}
button { border: 0; background: none; padding: 0; margin: 0; font: inherit; color: inherit; display: flex; align-items: center; white-space: nowrap; flex: none; }
a { color: inherit; text-decoration: none; }
i { display: block; flex: none; }
ol, ul { list-style: none; margin: 0; padding: 0; }
.defs { display: none; }
.ic { fill: none; stroke: currentColor; stroke-width: 1; flex: none; display: block; }
.s12 { width: 12px; height: 12px; }
.s14 { width: 14px; height: 14px; }
.s16 { width: 16px; height: 16px; }
.s18 { width: 18px; height: 18px; }
.s24 { width: 24px; height: 24px; }
.ar { width: 6px; margin-left: 3px; border: 3px solid transparent; border-top: 4px solid #75829c; border-bottom: 0; }
.vsep { width: 1px; height: 20px; background: #d8dbe0; }

/* title bar */
.titlebar { height: 40px; background: #e1e2e6; display: flex; justify-content: space-between; flex: none; }
.tabs { display: flex; gap: 3px; align-items: flex-end; }
.tab { height: 30px; background: #d7d8db; border-radius: 3px 3px 0 0; color: #444d5e; gap: 4px; }
.home { width: 67px; background: #638ffa; color: #fff; justify-content: center; }
.docer { width: 125px; padding-left: 10px; }
.file { width: 250px; padding: 0 12px 0 10px; }
.file.on { background: #fff; color: #1a1f2b; }
.logo { width: 16px; height: 16px; }
.mon { width: 12px; height: 12px; margin-left: auto; color: #b0b9d0; }
.dot { width: 6px; height: 6px; border-radius: 3px; background: #b9c1d8; margin-left: 8px; }
.on .dot { background: #e99a08; }
.dot.none { background: none; }
.newtab { height: 30px; padding: 0 9px; color: #46546e; }
.newtab .ic { stroke-width: 2; }
.winctl { display: flex; align-items: center; gap: 16px; padding: 0 5px 0 0; color: #46546e; }
.login { height: 24px; border-radius: 12px; background: #f5a50c; color: #fff; padding: 0 2px 0 6px; gap: 4px; margin-left: -3px; }
.winctl .vsep { margin: 0 -6px 0 -8px; height: 20px; }

/* menu bar */
.menubar { height: 38px; background: #fff; display: flex; align-items: center; flex: none; }
.filebtn { padding: 0 10px 0 11px; gap: 6px; }
.quick { display: flex; align-items: center; gap: 9px; padding: 0 9px 0 9px; }
.menus { display: flex; gap: 26px; padding: 0 17px 0 16px; }
.menus a { height: 24px; line-height: 24px; }
.menus .wide { margin-left: 3px; }
.menus .on { background: #4a90f2; color: #fff; font-weight: 700; border-radius: 12px; padding: 0 10px; margin: 0 -10px; }
.ctx { color: #4a8ff0; gap: 32px; padding: 0 30px 0 23px; }
.search { display: flex; align-items: center; color: #8089a0; }
.search input { border: 0; width: 140px; padding: 0; font: inherit; outline: 0; background: none; }
.search input::placeholder { color: #6c7690; }
.mright { display: flex; align-items: center; gap: 11px; margin-left: auto; padding-right: 12px; }
.mright button { gap: 4px; color: #3c465c; }
.mright .share { background: #4a90f2; color: #fff; height: 24px; border-radius: 3px; padding: 0 8px; gap: 4px; }
.mright .vsep { margin: 0 4px; }
.mright .fold { margin-left: 5px; }

/* ribbon */
.ribbon { height: 64px; background: #fff; display: flex; flex: none; position: relative; z-index: 1; box-shadow: 0 1px 2px #d9dbe0; padding-bottom: 2px; }
.grp { display: flex; gap: 12px; padding: 5px 11px 0 10px; border-right: 1px solid #eceef0; }
.grp:first-child { padding-left: 7px; }
.online { gap: 13px; padding: 5px 10px 0 11px; }
.rb { flex-direction: column; gap: 5px; justify-content: flex-start; }
.rb > span { display: flex; align-items: center; }
.dim, .dim .ar { color: #a5a7ab; }
.stack { display: flex; flex-direction: column; gap: 10px; margin-left: -2px; }
.grp .stack:last-child { margin-right: -2px; }
.tight .stack { margin-left: -4px; }
.tight .stack:last-child { margin-right: -4px; }
.stack button { height: 18px; gap: 4px; }
.stack .ar { margin-left: 1px; }

/* work area */
.work { flex: 1; display: flex; min-height: 0; }
.rail { width: 39px; border-right: 1px solid #e0e3e8; padding: 2px 1px; display: flex; flex-direction: column; gap: 4px; color: #39445c; }
.rail button { width: 32px; height: 32px; justify-content: center; }
.rail .on { background: #d8dde4; border-radius: 3px; }
.panel { width: 300px; flex: none; border-right: 1px solid #e0e3e8; display: flex; flex-direction: column; padding: 3px 5px 2px 3px; }
.phead { display: flex; justify-content: space-between; align-items: center; padding: 0 8px 0 10px; height: 24px; color: #5a6478; }
.phead h2 { margin: 0; font-size: 18px; line-height: 24px; font-weight: 400; color: #232b3b; }
.ptools { display: flex; align-items: center; gap: 10px; padding: 1px 5px 0 5px; height: 29px; color: #777; }
.smart { margin-left: auto; gap: 5px; color: #232b3b; }
.tree { flex: 1; margin-top: 4px; border: 1px solid #e0e3e8; border-radius: 3px; padding: 72px 8px 0 12px; }
.tree li { height: 22px; display: flex; align-items: center; gap: 5px; color: #333c4d; white-space: pre; }
.tw { width: 10px; height: 6px; }
.tree .l2 { margin-left: 16px; }
.tree .l3 { padding-left: 21px; margin-left: 26px; }
.tree .on { background: #d8dde4; border: 1px solid #c9d2db; height: 24px; padding-left: 20px; margin-top: -1px; }

.canvas { flex: 1; display: flex; min-width: 0; overflow: hidden; }
.vruler { width: 28px; flex: none; position: relative; padding: 0 0 0 3px; }
.corner { height: 22px; padding: 12px 0 0 4px; }
.corner i { width: 6px; height: 6px; border: 2px solid #a9b0c0; border-width: 0 0 2px 2px; }
.vruler ol { height: 823px; width: 16px; display: grid; grid-template-rows: repeat(22, 1fr); background: linear-gradient(#e7eaf1 743px, transparent 743px); align-items: center; }
.vruler li { height: 20px; background: linear-gradient(#8894ad, #8894ad) 100% 0 / 10px 1px no-repeat, linear-gradient(#8894ad, #8894ad) 100% 100% / 10px 1px no-repeat; display: flex; justify-content: center; align-items: center; }
.vruler b { writing-mode: vertical-rl; transform: rotate(180deg); font: 10px/14px "Noto Sans", sans-serif; color: #4a556c; }
.rowmark { position: absolute; left: 3px; width: 16px; height: 5px; background: #b7bed1; }
.r1 { top: 447px; } .r2 { top: 496px; } .r3 { top: 539px; } .r4 { top: 586px; } .r5 { top: 633px; } .r6 { top: 687px; }
.stage { flex: 1; display: flex; justify-content: center; }
.doc { width: 745px; flex: none; position: relative; display: flex; flex-direction: column; z-index: 2; }
.hruler { height: 25px; position: relative; padding: 0 13px 0 11px; flex: none; }
.hruler ol { position: relative; display: grid; grid-template-columns: repeat(25, 1fr); text-align: center; font-size: 10px; line-height: 15px; color: #4a556c; }
.hruler li { height: 15px; }
.band { position: absolute; left: 107px; top: 0; width: 530px; height: 15px; background: #e7eaf1; }
.colmark { position: absolute; top: 0; width: 12px; height: 15px; background: radial-gradient(circle, #66718c 30%, transparent 34%) 1px 2px / 3px 3px #b7bed1; }
.c1 { left: 107px; width: 17px; } .c2 { left: 418px; } .c3 { left: 520px; } .c4 { left: 624px; }
.indent { position: absolute; left: 114px; top: 0; }
.shade { flex: 1; display: flex; padding: 0 15px 17px; background: linear-gradient(to right, #f5f6f9, #dbdde0 15px, #dbdde0 calc(100% - 15px), #f5f6f9); }
.page { flex: 1; background: #fff; overflow: hidden; display: flex; flex-direction: column; padding: 0 87px; color: #000; }
.text { margin: -16px 20px 0 20px; font: 14px/28px "Liberation Serif", "Noto Sans CJK SC", serif; }
.text p { margin: 0; height: 28px; white-space: nowrap; display: flex; justify-content: space-between; }
.end { width: 202px; white-space: normal; text-align: justify; text-align-last: justify; }
.note { width: 196px; text-align: left; text-align-last: left; }
.loose { width: 192px; text-align: justify; text-align-last: justify; }
table { margin: 37px 0 0 11px; width: 519px; flex: none; border-collapse: collapse; table-layout: fixed; font: 14px/20px "Liberation Serif", "Noto Sans CJK SC", serif; border: 1px solid #4f81bd; }
th { background: #4f81bd; color: #fff; font-weight: 400; height: 44px; padding: 0; border-bottom: 3px solid #fff; }
td { border: 1px solid #4f81bd; height: 47px; text-align: center; padding: 0; }
tbody tr:nth-child(2) td { height: 43px; }
tbody tr:nth-child(odd) { background: #b8cce4; }
tbody tr:first-child td { border-top: 0; height: 49px; }
.foot { margin-top: 78px; display: flex; justify-content: space-between; height: 22px; font: 10px/14px "Liberation Serif", serif; color: #6f8296; }
.foot i { width: 22px; border-top: 1px solid #bbb; }
.foot .cl { border-right: 1px solid #bbb; }
.foot .cr { border-left: 1px solid #bbb; }
.foot span { margin-left: 116px; }

/* handles over the table */
.h { position: absolute; background: #fafafa; border: 1px solid #c0c0c0; border-radius: 2px; justify-content: center; color: #555; }
.hmove { left: 94px; top: 391px; width: 19px; height: 19px; }
.hcol { left: 632px; top: 531px; width: 16px; height: 33px; border-left: 0; }
.hrow { left: 355px; top: 688px; width: 33px; height: 17px; border-top: 0; }
.hsize { left: 631px; top: 687px; width: 19px; height: 19px; }
.eject { left: 749px; top: 45px; width: 24px; height: 24px; border-color: #eee; box-shadow: 0 0 3px #ddd; }
.check { position: absolute; left: 749px; top: 78px; width: 100px; height: 32px; background: #fff; border-radius: 3px; box-shadow: 0 1px 5px #c5c8cd; color: #000; gap: 6px; overflow: hidden; }
.check span { width: 31px; height: 32px; background: #8a87ff; color: #fff; display: flex; align-items: center; justify-content: center; }

/* menus */
.menu { position: absolute; left: 166px; top: -1px; width: 255px; background: #fff; border: 1px solid #c9cfdb; box-shadow: 1px 1px 2px #c5cde0; padding: 1px 0 0; display: flex; flex-direction: column; z-index: 3; }
.mi { height: 28px; padding: 0 17px 0 8px; gap: 8px; position: relative; width: 100%; }
.mi.low { height: 27px; padding: 0 17px 1px 32px; }
.mi.on { background: #e7eaf0; }
.mi.dim { color: #a0a3a8; }
.mi kbd { font: 13px/16px "Noto Sans", sans-serif; color: #777b84; margin-left: auto; }
.mi.dim kbd { color: #8b8f96; }
.menu hr { border: 0; border-top: 1px solid #dde0e6; margin: 3px 0 5px; width: 100%; }
.sub { margin: 0 -9px 0 auto; border: 3px solid transparent; border-left: 4px solid #75829c; border-right: 0; }
.bar { width: 1px; height: 12px; background: #d5d8dd; margin-left: auto; }
.bar + .sub { margin-left: 1px; }
.submenu { left: 421px; top: 205px; width: 242px; padding: 0; z-index: 2; }
.coin { flex: none; }

/* floating format bar */
.mini { position: absolute; left: 170px; top: 582px; width: 385px; height: 54px; background: #fff; border: 1px solid #b9c0ca; box-shadow: 1px 1px 3px #bbb; display: flex; z-index: 4; padding: 1px; }
.rows { width: 285px; }
.r { display: flex; align-items: center; height: 24px; gap: 5px; }
.r2 { margin-top: 2px; gap: 9px; padding-left: 5px; }
.r button { height: 24px; }
.r .gapl { margin-left: 4px; }
.r .on { background: #dde1e6; padding: 0 3px; margin: 0 -3px; border-radius: 2px; }
.mini select { appearance: none; border: 1px solid #dcdfe4; height: 24px; font: inherit; color: inherit; padding: 0 10px 0 2px; margin: 0; background: conic-gradient(from 315deg at 50% 100%, #75829c 90deg, transparent 0) calc(100% - 3px) 50% / 6px 3px no-repeat #fff; border-radius: 0; }
.fn { width: 117px; }
.mini .fs { width: 80px; margin: 0 1px 0 -6px; }
.bold { font-weight: 700; font-size: 18px; width: 15px; justify-content: center; }
.r .ital { font: italic 18px "Liberation Serif", serif; width: 16px; justify-content: center; }
.mini .vsep { height: 46px; margin: 3px 13px 0 0; }
.mini .rb { padding-top: 3px; margin-right: 12px; gap: 4px; }

.arrows { position: absolute; left: 0; top: 0; z-index: 6; pointer-events: none; }
.red { fill: #f90404; filter: drop-shadow(3px 2px 2px #0006); }

/* scroll bar and right rail */
.scroll { width: 16px; border-right: 2px solid #e0e3ea; display: flex; flex-direction: column; flex: none; padding: 4px 0 0; }
.scroll svg { margin-left: 2px; }
.track { flex: 1; margin-top: 2px; background: #e8eaf0; display: flex; flex-direction: column; align-items: center; padding: 8px 0; gap: 14px; }
.up { border: 3px solid transparent; border-bottom: 4px solid #8f9bb3; border-top: 0; }
.dn { border: 3px solid transparent; border-top: 4px solid #8f9bb3; border-bottom: 0; }
.sq { width: 6px; height: 6px; border: 1px solid #8f9bb3; }
.up.two { filter: drop-shadow(0 -4px 0 #8f9bb3); }
.dn.two { filter: drop-shadow(0 4px 0 #8f9bb3); }
.thumb { width: 12px; height: 42px; border-radius: 6px; background: #d4d7e0; margin: auto 0 49px; }
.rrail { width: 41px; flex: none; display: flex; flex-direction: column; align-items: center; gap: 20px; padding-top: 11px; color: #2c3548; }
.grip { width: 20px; height: 4px; border: 1px solid #c8ccd3; border-width: 1px 0; margin-bottom: 1px; }
.last { margin-top: auto; width: 38px; justify-content: center; border-top: 1px solid #e0e3e8; padding: 16px 0 10px; position: relative; z-index: 10; }

/* status bar */
.status { height: 24px; border-top: 1px solid #dfe1e6; background: #f5f6f9; display: flex; align-items: center; justify-content: space-between; flex: none; padding-top: 5px; }
.sl, .sr { display: flex; align-items: center; }
.sl { gap: 6px; padding-left: 5px; }
.sl button { gap: 3px; }
.sl .vsep, .sr .vsep { height: 16px; }
.sl .sec { margin-left: 4px; }
.sl .col { margin: 0 3px 0 5px; }
.sl .a { margin-left: 4px; }
.sl .b { margin: 0 4px 0 12px; }
.hot { background: #e7f0fb; padding: 0 3px; height: 20px; }
.sl > .ar { margin-left: -3px; }
.sl .chk { margin: 0 -3px 0 -2px; }
.sl .miss { margin-left: 9px; }
.sr { gap: 10px; padding-right: 13px; }
.sr .v1 { margin: 0 0 0 3px; }
.sr .v2 { margin: 0 6px 0 3px; }
.sr .on { background: #d8dde4; padding: 3px 4px; margin: 0 -3px 0 0; }
.zoomv { gap: 6px; }
.sr input { width: 138px; height: 12px; margin: 0; appearance: none; background: linear-gradient(to right, #3c465c 44%, #cdd2dc 44%) 0 50% / 100% 1px no-repeat; }
.sr input::-webkit-slider-thumb { appearance: none; width: 12px; height: 12px; border-radius: 6px; border: 1px solid #444; background: #eee; }

.brand { position: absolute; right: 11px; bottom: 7px; display: flex; z-index: 9; opacity: .9; }
.brand div { display: flex; flex-direction: column; }
.brand strong { font: 700 21px/24px "Noto Sans CJK SC", sans-serif; color: #5b9bd8; }
.brand span { font: 700 16px/18px "Liberation Sans", sans-serif; color: #6cc98a; }
```
